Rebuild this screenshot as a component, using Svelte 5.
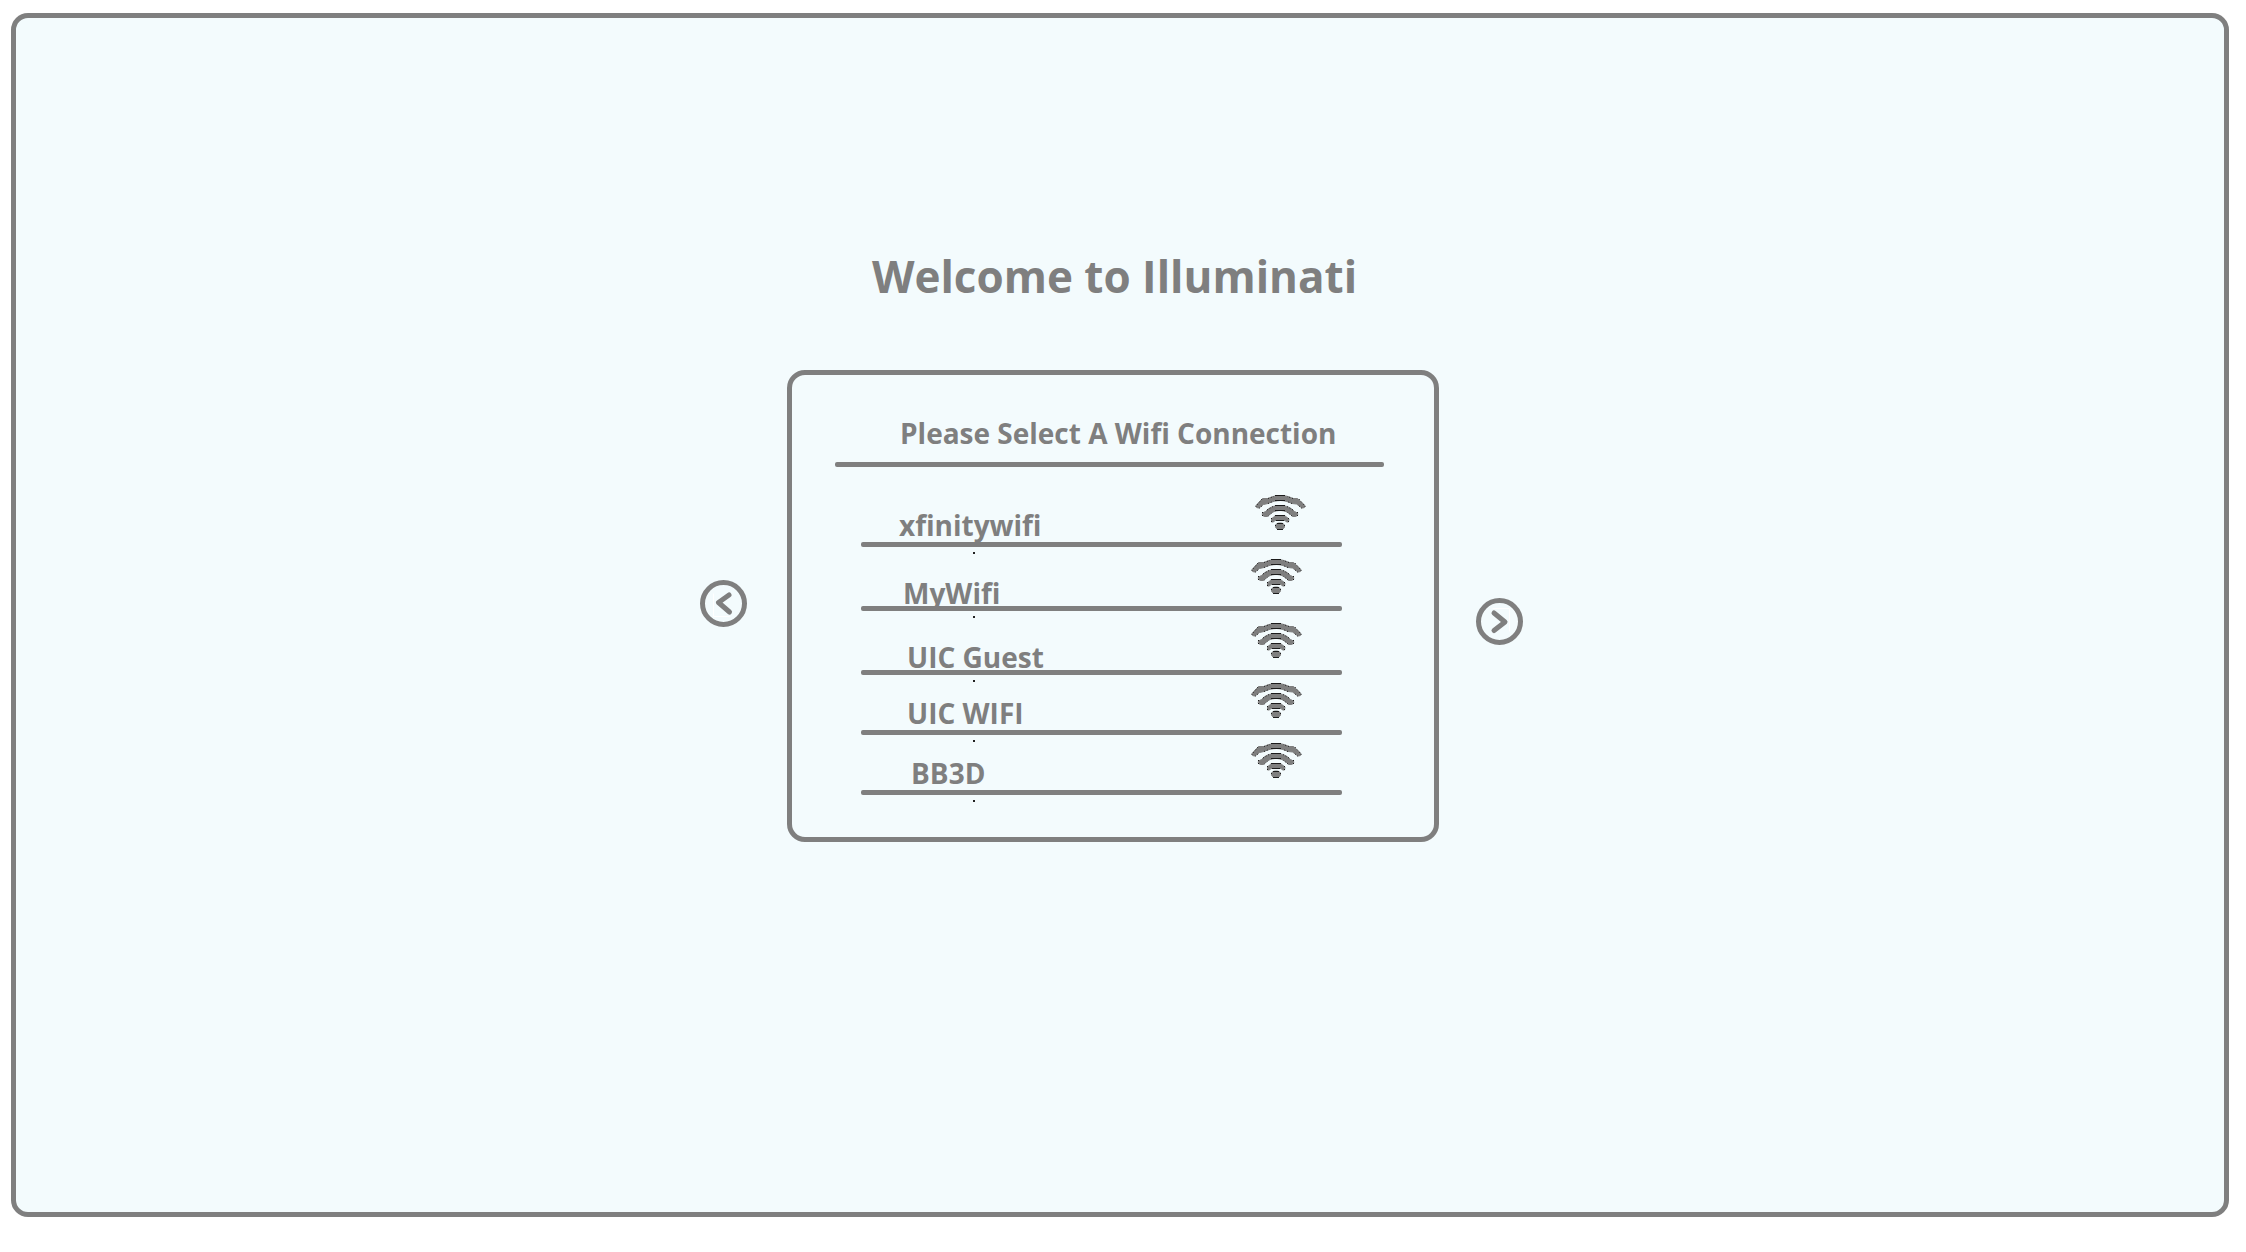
<script>
  const networks = [
    { name: 'xfinitywifi', row: 'first', indent: 'indent-1', seat: 'high' },
    { name: 'MyWifi', row: 'tall', indent: 'indent-2', seat: 'low' },
    { name: 'UIC Guest', row: 'tall', indent: 'indent-3', seat: 'low' },
    { name: 'UIC WIFI', row: 'short', indent: 'indent-3', seat: 'high' },
    { name: 'BB3D', row: 'short', indent: 'indent-4', seat: 'high' },
  ];
</script>

{#snippet wifi()}
  <svg class="wifi" viewBox="0 0 51 35" width="51" height="35" aria-hidden="true">
    <path d="M1 10.5L7.5 3.5H13C17 1.5 21 .5 25.5 .5S34 1.5 38 3.5H42.5L50 10.5Q50 13.5 47 13L41.5 9L37 8.5C33 6.5 29 5.5 25.5 5.5S17 6.5 13 8.5L8.5 9.5L4 13Q1 13.5 1 10.5Z" />
    <path d="M7.5 18L10.5 16.5C14 12.5 19 10.5 25 10.5S36 12.5 39.5 16.5L42.5 18Q43.5 21 40 21.5H37.5C34 17.5 30 15.5 25 15.5S16 17.5 12.5 21.5H10Q6.5 21 7.5 18Z" />
    <path d="M16.5 24L18.5 22C20 20.5 22 20.5 25 20.5S30 20.5 31.5 22L34 24L33.5 27H31.5C30.5 25 28 25 25 25S19.5 25 18.5 27H16.500Z" />
    <ellipse cx="25" cy="31.2" rx="4.5" ry="3.2" />
    <path class="edge" d="M20 .5H30M20 5.5H30M20 10.5H30M20 15.5H30M20 20.5H30M21 25.5H29M22 34.5H28M22 28.5H28" />
    <path class="edge dots" d="M.5 12L7 4M50.500 12L44 4M13 3.500L19 1.500M38 3.500L32 1.500M13 8.500L18 6.500M37 8.500L32 6.500M4 13.500L8 10M47 13.500L43 10M12 15L18 11.500M38 15L32 11.500M7.500 17V21M42.500 17V21M13.500 21L18 17M37 21L32 17M16.500 23V27M33.500 23V27M20.500 30V33M29.500 30V33" />
  </svg>
{/snippet}

<main class="frame">
  <h1>Welcome to Illuminati</h1>

  <div class="picker">
    <button class="arrow prev" aria-label="Previous">
      <svg viewBox="0 0 47 47" width="47" height="47" aria-hidden="true">
        <circle cx="23.5" cy="23.5" r="21" />
        <path class="shine" d="M13.5 14V36.5H30" />
        <path d="M29 15L18.5 22.5L29.5 32" />
      </svg>
    </button>

    <section class="card" aria-labelledby="wifi-heading">
      <h2 id="wifi-heading">Please Select A Wifi Connection</h2>
      <div class="rule"></div>
      <ul>
        {#each networks as network}
          <li>
            <button class="network {network.row}">
              <span class="name {network.indent} {network.seat}">{network.name}</span>
              {@render wifi()}
            </button>
            <div class="rule"></div>
          </li>
        {/each}
      </ul>
    </section>

    <button class="arrow next" aria-label="Next">
      <svg viewBox="0 0 47 47" width="47" height="47" aria-hidden="true">
        <circle cx="23.5" cy="23.5" r="21" />
        <path class="shine" d="M17 10.5H33.5V33" />
        <path d="M18 15L29 24L18 32.5" />
      </svg>
    </button>
  </div>
</main>

<style>
  :global(body) {
    background: #fff;
  }

  .frame {
    box-sizing: border-box;
    min-height: calc(100vh - 48px);
    margin: 13px 17px 35px 11px;
    padding: 226px 17px 40px 0;
    border: 5px solid #7f7f7f;
    border-radius: 17px;
    background: #f3fbfd;
    color: #7f7f7f;
    font-family: 'Open Sans', 'Noto Sans', sans-serif;
    display: flex;
    flex-direction: column;
    align-items: center;
  }

  h1 {
    margin: 0 0 62px;
    padding-left: 6px;
    font-size: 44px;
    line-height: 64px;
    font-weight: 700;
  }

  .picker {
    display: flex;
    align-items: flex-start;
    max-width: 100%;
  }

  button {
    padding: 0;
    border: 0;
    background: none;
    color: inherit;
    font: inherit;
    cursor: pointer;
  }

  .arrow {
    flex: none;
    height: 47px;
  }

  .arrow svg {
    display: block;
    fill: none;
    stroke: #7f7f7f;
    stroke-width: 5;
    stroke-linecap: round;
    stroke-linejoin: round;
  }

  .arrow .shine {
    stroke: #fff;
    stroke-width: 1;
  }

  .prev {
    margin: 210px 40px 0 0;
  }

  .next {
    margin: 228px 0 0 37px;
  }

  .card {
    box-sizing: border-box;
    width: 652px;
    padding: 38px 50px 42px 43px;
    border: 5px solid #7f7f7f;
    border-radius: 18px;
  }

  h2 {
    margin: 0 0 9px;
    padding-left: 65px;
    font-size: 28px;
    line-height: 40px;
    font-weight: 700;
    white-space: nowrap;
  }

  .rule {
    height: 5px;
    border-radius: 2px;
    background: #7f7f7f;
  }

  ul {
    list-style: none;
    margin: 0 42px 0 26px;
    padding: 0;
  }

  li {
    position: relative;
  }

  /* small speck under each divider */
  li::after {
    content: '';
    position: absolute;
    left: 112px;
    top: calc(100% + 5px);
    width: 2px;
    height: 2px;
    background: #222;
  }

  .network {
    width: 100%;
    display: flex;
    justify-content: space-between;
    align-items: flex-end;
    text-align: left;
  }

  .first {
    height: 75px;
    padding-right: 36px;
  }

  .tall {
    height: 59px;
    padding-right: 40px;
  }

  .short {
    height: 55px;
    padding-right: 40px;
  }

  .name {
    font-size: 28px;
    line-height: 24px;
    font-weight: 700;
  }

  .high {
    padding-bottom: 5px;
  }

  .low {
    padding-bottom: 1px;
  }

  .indent-1 {
    padding-left: 38px;
  }

  .indent-2 {
    padding-left: 42px;
  }

  .indent-3 {
    padding-left: 46px;
  }

  .indent-4 {
    padding-left: 50px;
  }

  .wifi {
    display: block;
    flex: none;
    margin-bottom: 12px;
    fill: #7f7f7f;
    stroke: #7f7f7f;
    stroke-width: 1;
    stroke-linejoin: round;
  }

  .wifi .edge {
    fill: none;
    stroke: #1c1c1c;
  }

  .wifi .dots {
    stroke-dasharray: 1 2;
  }
</style>
